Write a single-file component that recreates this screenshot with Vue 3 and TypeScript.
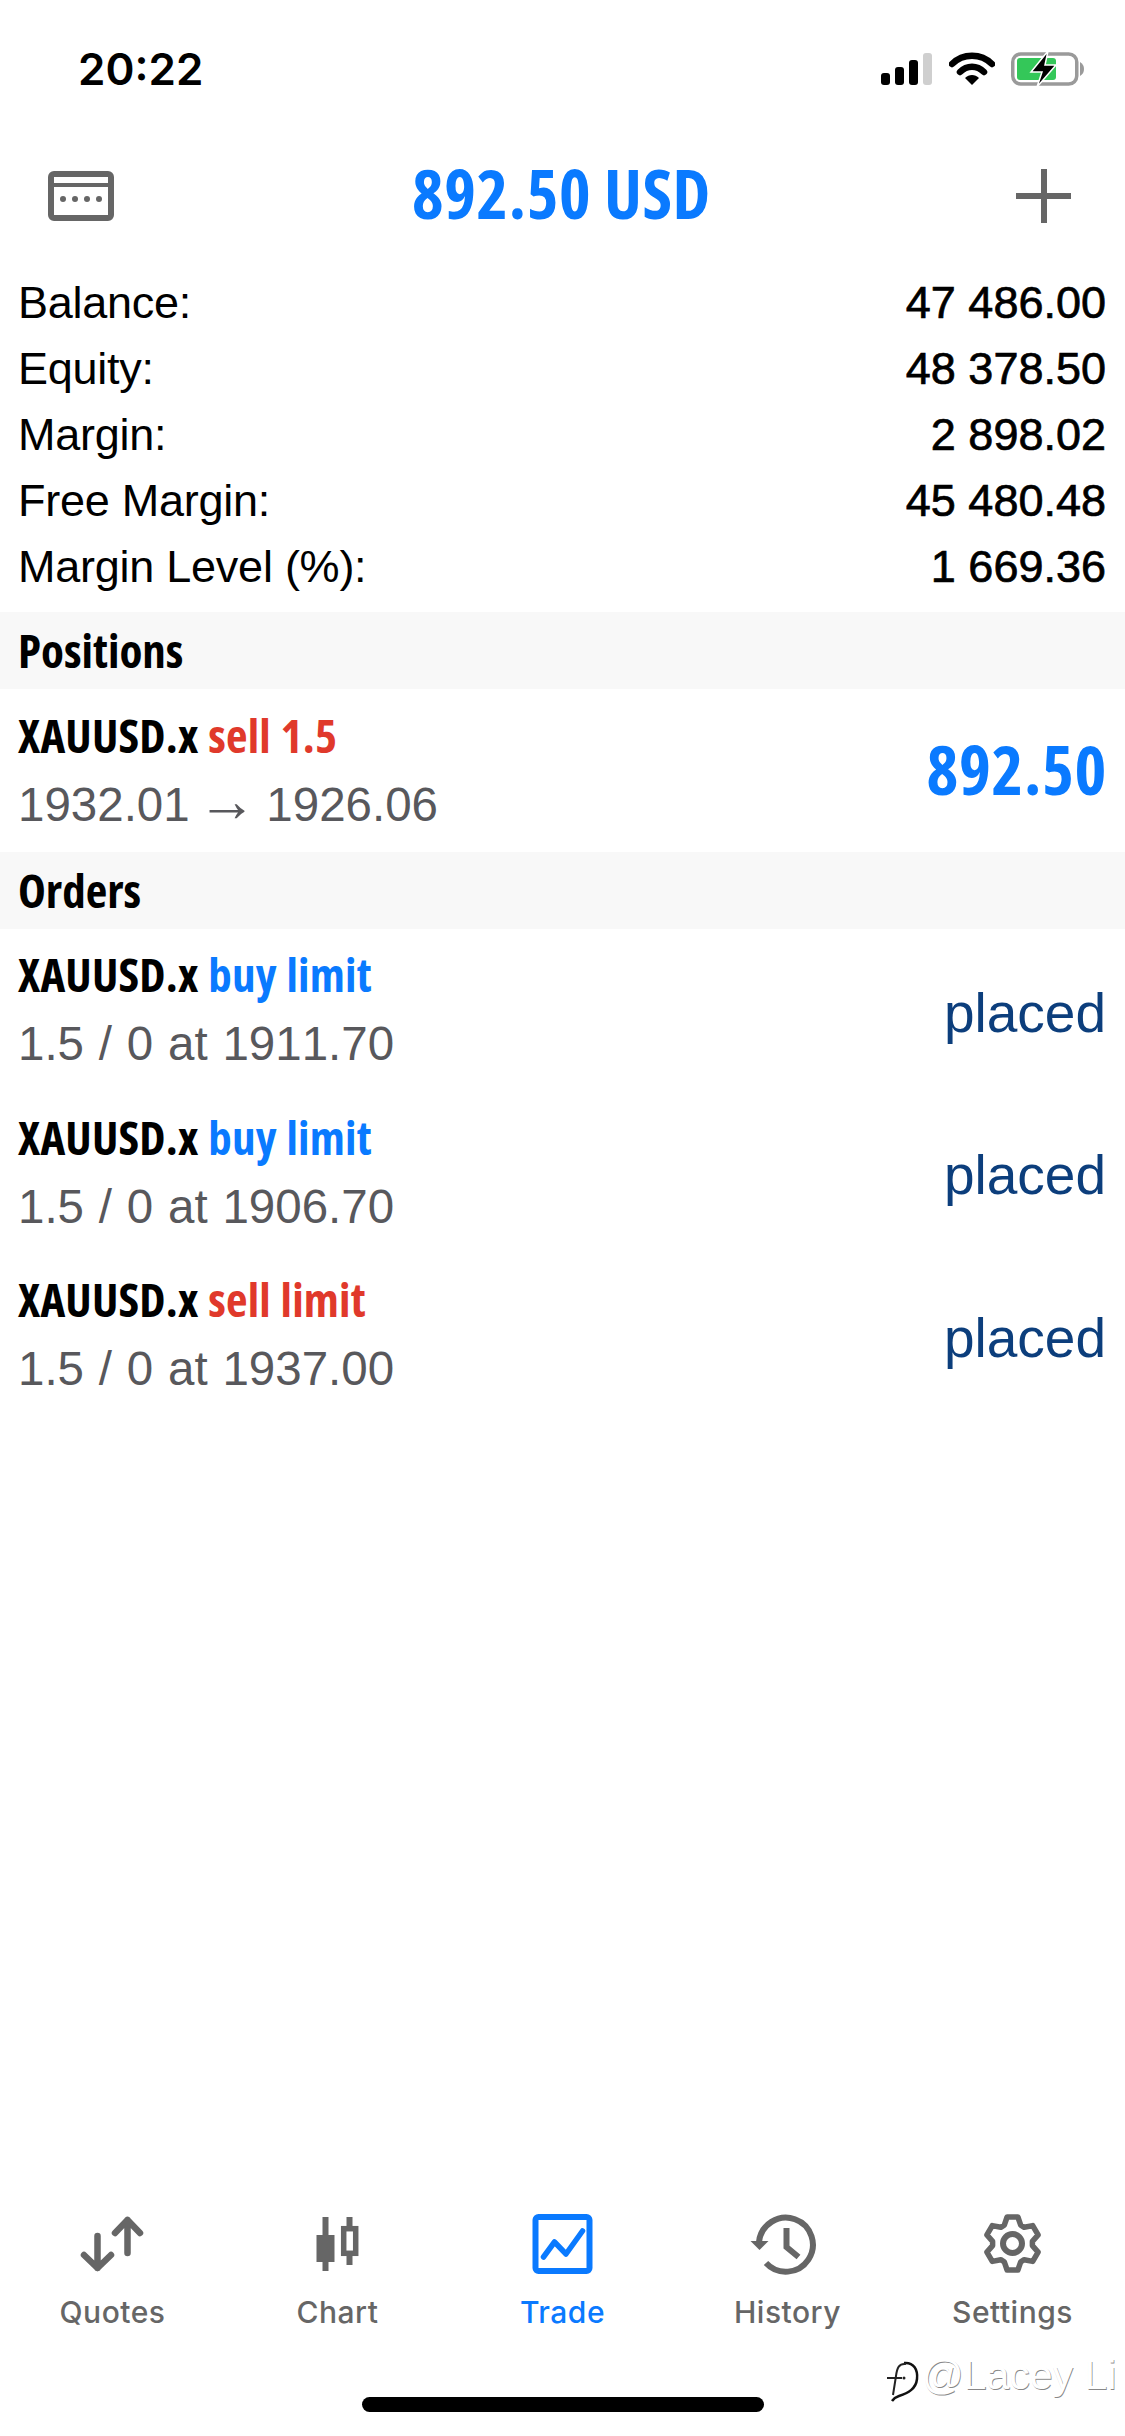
<script setup lang="ts">
// trade tab of the terminal, static data only
const account = [
  { label: 'Balance:', value: '47 486.00' },
  { label: 'Equity:', value: '48 378.50' },
  { label: 'Margin:', value: '2 898.02' },
  { label: 'Free Margin:', value: '45 480.48' },
  { label: 'Margin Level (%):', value: '1 669.36' },
]

const orders = [
  { id: 1, kind: 'buy limit', side: 'buy', detail: '1.5 / 0 at 1911.70' },
  { id: 2, kind: 'buy limit', side: 'buy', detail: '1.5 / 0 at 1906.70' },
  { id: 3, kind: 'sell limit', side: 'sell', detail: '1.5 / 0 at 1937.00' },
]

const tabs = ['Quotes', 'Chart', 'Trade', 'History', 'Settings']

// six tooth gear outline for the settings tab
function gearPath(cx: number, cy: number, outer: number, inner: number): string {
  const pts: string[] = []
  for (let i = 0; i < 6; i++) {
    const a = (i * Math.PI) / 3 - Math.PI / 2
    const steps: [number, number][] = [
      [inner, -0.42],
      [outer, -0.2],
      [outer, 0.2],
      [inner, 0.42],
    ]
    for (const [r, d] of steps) {
      pts.push(`${(cx + r * Math.cos(a + d)).toFixed(1)} ${(cy + r * Math.sin(a + d)).toFixed(1)}`)
    }
  }
  return 'M' + pts.join('L') + 'Z'
}
const gear = gearPath(39.5, 31.5, 27, 20)
</script>

<template>
  <div class="page">
    <div class="status">
      <span class="time">20:22</span>
      <div class="status-icons">
        <svg width="52" height="32" viewBox="0 0 52 32">
          <rect x="0" y="20" width="9" height="12" rx="3" fill="#000" />
          <rect x="14" y="14" width="9" height="18" rx="3" fill="#000" />
          <rect x="28" y="7" width="9" height="25" rx="3" fill="#000" />
          <rect x="42" y="0" width="9" height="32" rx="3" fill="#cfcfcf" />
        </svg>
        <svg width="46" height="34" viewBox="0 0 46 34">
          <path d="M3 12 C14 1 32 1 43 12" fill="none" stroke="#000" stroke-width="6.5" stroke-linecap="round" />
          <path d="M11 20 C18 13 28 13 35 20" fill="none" stroke="#000" stroke-width="6.5" stroke-linecap="round" />
          <path d="M16 26 C20 22 26 22 30 26 L23 33Z" fill="#000" />
        </svg>
        <svg width="74" height="36" viewBox="0 0 74 36">
          <rect x="1.75" y="3" width="64" height="30" rx="8" fill="#fff" stroke="#9a9a9a" stroke-width="3.5" />
          <rect x="6" y="7" width="39" height="22" rx="3" fill="#34c759" />
          <path d="M69 11 C72 13 73 15 73 18 C73 21 72 23 69 25Z" fill="#9a9a9a" />
          <path d="M37 0 L20 21 H31 L26 36 L45 14 H34 Z" fill="#000" stroke="#fff" stroke-width="1.5" />
        </svg>
      </div>
    </div>

    <div class="nav">
      <svg width="66" height="50" viewBox="0 0 66 50">
        <rect x="3" y="3" width="60" height="44" rx="3" fill="none" stroke="#666" stroke-width="6" />
        <rect x="3" y="12" width="60" height="4" fill="#666" />
        <circle cx="15" cy="28" r="3" fill="#666" />
        <circle cx="27" cy="28" r="3" fill="#666" />
        <circle cx="39" cy="28" r="3" fill="#666" />
        <circle cx="51" cy="28" r="3" fill="#666" />
      </svg>
      <h1 class="title">892.50 USD</h1>
      <div class="plus"></div>
    </div>

    <div class="account">
      <div v-for="row in account" :key="row.label" class="account-row">
        <span class="account-label">{{ row.label }}</span>
        <span class="account-value">{{ row.value }}</span>
      </div>
    </div>

    <div class="band">Positions</div>
    <div class="item position">
      <div>
        <div class="line-top">XAUUSD.x <span class="sell">sell 1.5</span></div>
        <div class="line-sub">1932.01 <span class="arrow">→</span> 1926.06</div>
      </div>
      <div class="profit">892.50</div>
    </div>

    <div class="band">Orders</div>
    <div v-for="o in orders" :key="o.id" class="item">
      <div>
        <div class="line-top">XAUUSD.x <span :class="o.side">{{ o.kind }}</span></div>
        <div class="line-sub">{{ o.detail }}</div>
      </div>
      <div class="placed">placed</div>
    </div>

    <div class="spacer"></div>

    <div class="tabbar">
      <div v-for="(tab, i) in tabs" :key="tab" class="tab" :class="{ active: tab === 'Trade' }">
        <svg width="80" height="64" viewBox="0 0 80 64">
          <g v-if="i === 0" fill="none" stroke="#666" stroke-width="6.5" stroke-linecap="round" stroke-linejoin="round">
            <path d="M24.5 24 V56 M11 43 L24.5 56 L38 43" />
            <path d="M54.5 41 V8 M42 21 L54.5 8 L67 21" />
          </g>
          <g v-else-if="i === 1" fill="#666">
            <rect x="24.5" y="5" width="6" height="54" />
            <rect x="18.5" y="23" width="18" height="27" />
            <rect x="48.5" y="5" width="6" height="48" />
            <rect x="45.7" y="16.7" width="12" height="24.6" fill="#fff" stroke="#666" stroke-width="5.5" />
          </g>
          <g v-else-if="i === 2" fill="none" stroke="#0a7aff">
            <rect x="12.5" y="5" width="54" height="54" rx="3" stroke-width="6" />
            <path d="M20.5 45 L31.5 30 L43 42 L59.5 19" stroke-width="5.5" stroke-linecap="round" stroke-linejoin="round" />
          </g>
          <g v-else-if="i === 3">
            <path d="M11 30 A27 27 0 1 1 18 51" fill="none" stroke="#666" stroke-width="6" />
            <path d="M2.5 29 H20.5 L11.5 38 Z" fill="#666" />
            <path d="M38.5 16 V35 L50.5 45" fill="none" stroke="#666" stroke-width="6" />
          </g>
          <g v-else fill="none" stroke="#666">
            <path :d="gear" stroke-width="5.5" stroke-linejoin="round" />
            <circle cx="39.5" cy="31.5" r="9.5" stroke-width="6" />
          </g>
        </svg>
        <span class="tab-label">{{ tab }}</span>
      </div>
    </div>

    <div class="home-bar"></div>

    <div class="watermark">
      <svg width="36" height="46" viewBox="0 0 36 46">
        <path d="M20 5 C30 4 34 12 33 21 C32 31 24 35 15 38 C12 39 10 40 8 43" fill="none" stroke="#111" stroke-width="2.5" />
        <path d="M22 6 C15 5 13 10 12 18 L9 37 M3 20 H18" fill="none" stroke="#222" stroke-width="2" />
        <circle cx="20" cy="20" r="1.5" fill="#222" />
      </svg>
      <span class="watermark-text">@Lacey Li</span>
    </div>
  </div>
</template>

<style>
html,
body {
  margin: 0;
  background: #fff;
}
</style>

<style scoped>
.page {
  position: relative;
  width: 1125px;
  height: 2436px;
  overflow: hidden;
  display: flex;
  flex-direction: column;
  background: #fff;
  font-family: 'Liberation Sans', Arial, sans-serif;
  color: #000;
}
.status {
  height: 138px;
  display: flex;
  align-items: center;
  justify-content: space-between;
  padding: 0 40px 0 78px;
}
.time {
  font-family: Inter, sans-serif;
  font-weight: 600;
  font-size: 44px;
}
.status-icons {
  display: flex;
  align-items: center;
  gap: 16px;
}
.nav {
  height: 116px;
  display: grid;
  grid-template-columns: 1fr auto 1fr;
  align-items: center;
  padding: 0 50px 0 48px;
}
.title {
  margin: 0 0 6px;
  font-family: 'Open Sans', sans-serif;
  font-stretch: 75%;
  font-weight: 700;
  font-size: 67.5px;
  letter-spacing: 0.6px;
  color: #0a7aff;
}
.plus {
  justify-self: end;
  margin-right: 4px;
  width: 55px;
  height: 54px;
  background:
    linear-gradient(#666, #666) center / 100% 6px no-repeat,
    linear-gradient(#666, #666) center / 6px 100% no-repeat;
}
.account {
  padding: 16px 19px 12px 18px;
}
.account-row {
  height: 66px;
  display: flex;
  align-items: center;
  justify-content: space-between;
  font-size: 45px;
}
.account-label {
  letter-spacing: -0.25px;
}
.account-value {
  -webkit-text-stroke: 0.7px #000;
}
.band {
  height: 77px;
  box-sizing: border-box;
  display: flex;
  align-items: center;
  padding: 0 0 2px 18px;
  background: #f8f8f8;
  font-family: 'Open Sans', sans-serif;
  font-stretch: 75%;
  font-weight: 700;
  font-size: 47px;
}
.item {
  height: 162.5px;
  display: flex;
  align-items: center;
  justify-content: space-between;
  padding: 0 19px 0 18px;
}
.position {
  height: 163px;
}
.line-top {
  height: 68px;
  line-height: 64px;
  font-family: 'Open Sans', sans-serif;
  font-stretch: 75%;
  font-weight: 700;
  font-size: 47px;
  letter-spacing: 0.2px;
  word-spacing: 1px;
}
.line-sub {
  height: 68px;
  line-height: 68px;
  font-size: 47.5px;
  font-kerning: none;
  word-spacing: 1.6px;
  color: #58585c;
}
.arrow {
  font-size: 59px;
  line-height: 1;
  margin: 0 -5px 0 -7px;
}
.sell {
  color: #e0392b;
}
.buy {
  color: #0a7aff;
}
.profit {
  margin: 0 -1px 5px 0;
  font-family: 'Open Sans', sans-serif;
  font-stretch: 75%;
  font-weight: 700;
  font-size: 68px;
  letter-spacing: 0.6px;
  color: #0a7aff;
}
.placed {
  margin-top: 5px;
  font-size: 55px;
  color: #0c3e7c;
}
.spacer {
  flex: 1;
}
.tabbar {
  display: flex;
}
.tab {
  flex: 1;
  display: flex;
  flex-direction: column;
  align-items: center;
  color: #666;
}
.tab.active {
  color: #0a7aff;
}
.tab-label {
  margin-top: 18px;
  font-family: Inter, sans-serif;
  font-size: 30px;
  font-weight: 500;
  letter-spacing: 0.5px;
  line-height: 36px;
}
.home-bar {
  width: 402px;
  height: 15px;
  margin: 67px auto 24px;
  border-radius: 8px;
  background: #000;
}
.watermark {
  position: absolute;
  left: 884px;
  top: 2352px;
  display: flex;
  align-items: flex-end;
  gap: 2px;
  white-space: nowrap;
}
.watermark-text {
  margin-bottom: 5px;
  font-size: 41px;
  color: #fff;
  text-shadow: 0.8px 0.8px 0.6px #888;
}
</style>
